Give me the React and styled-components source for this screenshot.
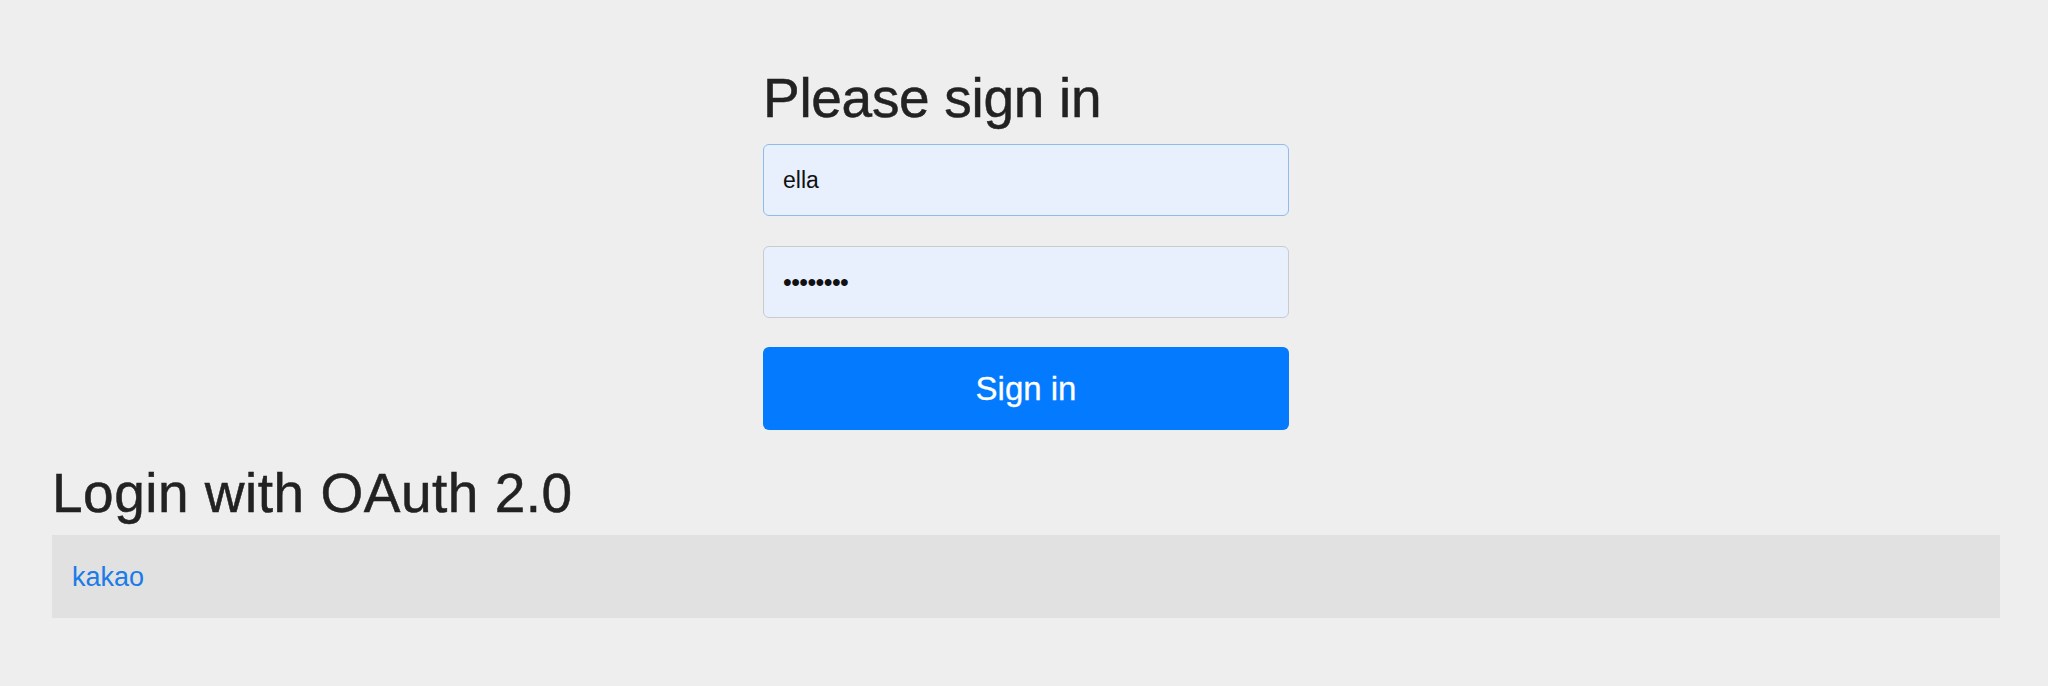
import React from 'react';
import styled, { createGlobalStyle } from 'styled-components';

const GlobalStyle = createGlobalStyle`
  html, body {
    margin: 0;
    padding: 0;
    background: #eeeeee;
  }

  body {
    font-family: "Liberation Sans", Arial, sans-serif;
    color: #212121;
  }
`;

const Page = styled.div`
  min-height: 686px;
  padding: 65px 48px 0 52px;
  box-sizing: border-box;
`;

const SignInForm = styled.form`
  width: 526px;
  margin: 0 auto 0 711px;
  display: flex;
  flex-direction: column;
`;

const Heading = styled.h2`
  margin: 0 0 ${(p) => p.$gap || 0}px;
  font-size: 55px;
  font-weight: 400;
  line-height: 66px;
  letter-spacing: ${(p) => p.$spacing || 0}px;
  color: #222222;
  -webkit-text-stroke: 0.5px #222222;
`;

const Field = styled.input`
  height: 72px;
  box-sizing: border-box;
  margin-bottom: ${(p) => p.$gap}px;
  padding: 0 19px;
  font-family: "Liberation Sans", Arial, sans-serif;
  font-size: ${(p) => (p.type === 'password' ? 25 : 23)}px;
  letter-spacing: ${(p) => (p.type === 'password' ? -0.6 : 0)}px;
  color: #111111;
  background: #e8f0fe;
  border: 1.5px solid ${(p) => (p.$focused ? '#8fbbee' : '#c9cbcf')};
  border-radius: 6px;
  outline: none;
`;

const SubmitButton = styled.button`
  height: 83px;
  padding: 0;
  font-family: "Liberation Sans", Arial, sans-serif;
  font-size: 33px;
  color: #ffffff;
  background: #047aff;
  border: none;
  border-radius: 6px;
  -webkit-text-stroke: 0.3px #ffffff;
  cursor: pointer;
`;

const OAuthSection = styled.section`
  margin-top: 30px;
`;

const ProviderRow = styled.div`
  height: 83px;
  display: flex;
  align-items: center;
  padding: 0 20px;
  background: #e1e1e1;
`;

const ProviderLink = styled.a`
  font-size: 27px;
  line-height: 40px;
  color: #1b7be8;
  text-decoration: none;
`;

const App = () => {
  return (
    <>
      <GlobalStyle />
      <Page>
        <SignInForm onSubmit={(e) => e.preventDefault()}>
          <Heading $gap={13} $spacing={-0.3}>Please sign in</Heading>
          <Field type="text" defaultValue="ella" $focused $gap={30} />
          <Field type="password" defaultValue="password" $gap={29} />
          <SubmitButton type="submit">Sign in</SubmitButton>
        </SignInForm>
        <OAuthSection>
          <Heading $gap={9} $spacing={0.5}>Login with OAuth 2.0</Heading>
          <ProviderRow>
            <ProviderLink href="#kakao">kakao</ProviderLink>
          </ProviderRow>
        </OAuthSection>
      </Page>
    </>
  );
};

export default App;
